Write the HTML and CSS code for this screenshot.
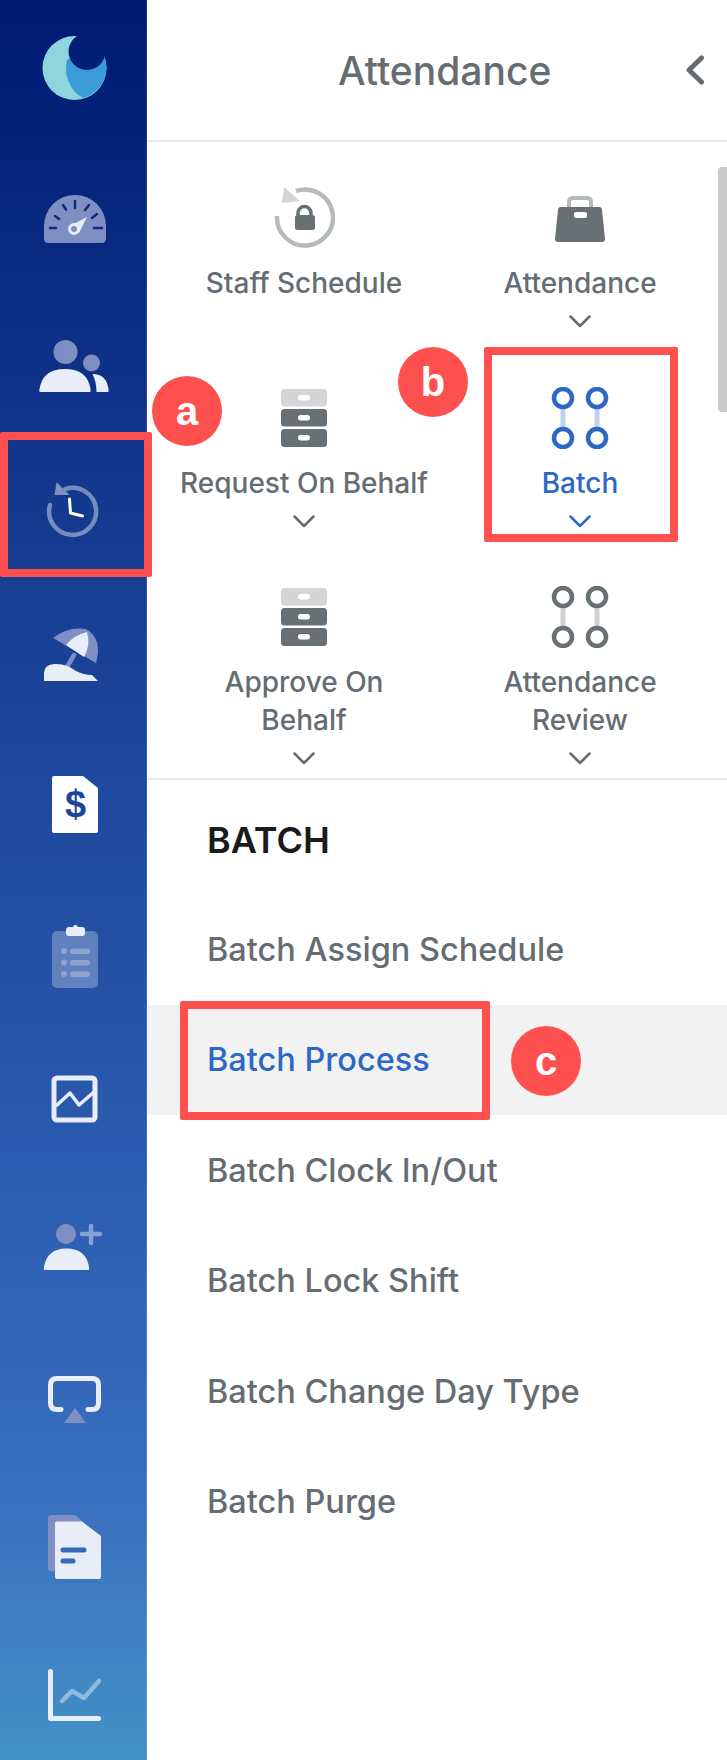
FILE: index.html
```html
<!DOCTYPE html>
<html lang="en">

<head>
    <meta charset="UTF-8">
    <meta name="viewport" content="width=device-width, initial-scale=1.0">
    <title>Attendance</title>
    <link rel="stylesheet" href="styles.css">
</head>

<body>
    <div class="app">
        <nav class="rail">
            <div class="rail-item">
                <svg viewBox="-44 -44 88 88">
                    <mask id="moon-bite"><rect x="-44" y="-44" width="88" height="88" fill="#fff"/><circle cx="13" cy="-22.5" r="18.5" fill="#000"/></mask>
                    <g mask="url(#moon-bite)">
                        <circle cx="0.5" cy="-6" r="32" fill="#8fd6dc"/>
                        <path d="M-7 -14 A34 34 0 0 0 9 24 A32 32 0 0 0 32.5 -6 A32 32 0 0 0 20 -30 Z" fill="#3a9bd8"/>
                    </g>
                </svg>
            </div>
            <div class="rail-item">
                <svg viewBox="-44 -44 88 88"><g transform="translate(-30 -27)">
                    <path class="soft-solid" d="M4 48 Q0 48 0 43 V31 A31 31 0 0 1 62 31 V43 Q62 48 58 48 Z"/>
                    <path class="ticks" d="M6 33 H12 M11 21 L15 24 M19 10 L22 14.5 M31 6 V13 M41 15 L45 10 M48 23 L53 19 M50 33 H58"/>
                    <path class="main-solid" d="M26 31 L43 22 L35 38 Z"/>
                    <circle cx="30" cy="34" r="4.5" fill="#7f8fc4" stroke="#e8edf8" stroke-width="3"/>
                </g></svg>
            </div>
            <div class="rail-item">
                <svg viewBox="-44 -44 88 88"><g transform="translate(-34.5 -30)">
                    <circle class="soft-solid" cx="26" cy="12" r="12"/>
                    <circle class="soft-solid" cx="52" cy="23" r="8.5"/>
                    <path class="main-solid" d="M1 52 Q-1 52 0 49 Q3 29 25.5 29 Q48 29 51 49 L51 52 Z"/>
                    <path class="main-solid" d="M53 34 Q67 34 69 49 L69 52 H57 Q57 42 53 34 Z"/>
                </g></svg>
            </div>
            <div class="rail-item">
                <svg viewBox="-44 -44 88 88"><g transform="translate(-27.5 -36)">
                    <path class="soft-line" d="M3.5 23 A23.5 23.5 0 1 0 19 7"/>
                    <path class="soft-solid" d="M10 0 L23 13 L8 13 Z"/>
                    <path class="hands" d="M23 17 L24 31 L36 34"/>
                </g></svg>
            </div>
            <div class="rail-item">
                <svg viewBox="-44 -44 88 88"><g transform="translate(-30 -39)">
                    <path class="soft-line" d="M30 28 L23 40"/>
                    <path class="soft-solid" d="M9 11 Q24 -1 42 2 Q59 12 52 36 Z"/>
                    <path class="main-solid" d="M22 18 Q30 8 43 5 Q47 18 40 30 Z"/>
                    <path class="main-solid" d="M0 54 V46 Q0 38 10 37 Q22 36 32 44 Q40 48 48 48 L54 54 Z"/>
                </g></svg>
            </div>
            <div class="rail-item">
                <svg viewBox="-44 -44 88 88"><g transform="translate(-22 -38)">
                    <path fill="#fff" d="M2 0 H31 L46 12 V55 Q46 57 44 57 H2 Q0 57 0 55 V2 Q0 0 2 0 Z"/>
                    <text class="dollar" x="23.5" y="41" text-anchor="middle">$</text>
                </g></svg>
            </div>
            <div class="rail-item">
                <svg viewBox="-44 -44 88 88"><g transform="translate(-22 -37)">
                    <rect class="faint-solid" x="0" y="6" width="46" height="57" rx="5"/>
                    <rect class="main-solid" x="14" y="2" width="19" height="9" rx="3"/>
                    <circle class="main-solid" cx="23.5" cy="2.5" r="2.5"/>
                    <g class="faint-solid">
                        <circle cx="12" cy="26" r="3"/><rect x="18" y="23.5" width="20" height="5.5" rx="2.7"/>
                        <circle cx="12" cy="37.5" r="3"/><rect x="18" y="35" width="20" height="5.5" rx="2.7"/>
                        <circle cx="12" cy="49" r="3"/><rect x="18" y="46.5" width="20" height="5.5" rx="2.7"/>
                    </g>
                </g></svg>
            </div>
            <div class="rail-item">
                <svg viewBox="-44 -44 88 88"><g transform="translate(-22 -34)">
                    <rect class="main-line" x="2" y="2" width="41" height="42" rx="3"/>
                    <path class="main-thin" d="M4 30 L18 17 L27 29 L42 16"/>
                </g></svg>
            </div>
            <div class="rail-item">
                <svg viewBox="-44 -44 88 88"><g transform="translate(-30 -34)">
                    <circle class="soft-solid" cx="22" cy="10" r="10"/>
                    <path class="main-solid" d="M1 46 Q-1 46 0 43 Q3 24.5 22.5 24.5 Q42 24.5 45 43 L45 46 Z"/>
                    <path class="soft-line" d="M38 10 H56 M47 2 V19"/>
                </g></svg>
            </div>
            <div class="rail-item">
                <svg viewBox="-44 -44 88 88"><g transform="translate(-26 -30)">
                    <path class="main-line" d="M13 33.500 H9 Q2.500 33.500 2.500 27 V9 Q2.500 2.500 9 2.500 H44 Q50.500 2.500 50.500 9 V27 Q50.500 33.500 44 33.500 H40"/>
                    <path class="soft-solid" d="M16 47 L27 32 L38 47 Z"/>
                </g></svg>
            </div>
            <div class="rail-item">
                <svg viewBox="-44 -44 88 88"><g transform="translate(-26 -39)">
                    <path class="soft-solid" d="M3 0 H27 L34 6 V56 H3 Q0 56 0 53 V3 Q0 0 3 0 Z"/>
                    <path class="main-solid" d="M7 8 Q7 6.500 9 6.500 H34 L53 21 V62 Q53 64 51 64 H9 Q7 64 7 62 Z"/>
                    <path class="doc-bars" d="M15 35 H36 M15 46 H25"/>
                </g></svg>
            </div>
            <div class="rail-item">
                <svg viewBox="-44 -44 88 88"><g transform="translate(-26 -33)">
                    <path class="soft-line" d="M14 32 L24 22 L36 29 L51 12"/>
                    <path class="main-line" d="M2.500 2.500 V49.500 H50.500"/>
                </g></svg>
            </div>
        </nav>

        <main class="panel">
            <header class="panel-head">
                <h1 class="panel-title">Attendance</h1>
                <svg class="back" viewBox="0 0 18 30"><path d="M15.500 3 L3 15 L15.500 27"/></svg>
            </header>

            <section class="modules">
                <div class="module">
                    <svg class="module-icon" width="62" height="62" viewBox="0 0 62 62">
                        <path class="ring" d="M4 29 A28 28 0 1 0 23 4"/>
                        <path class="light-fill" d="M11 0 L27 14 L9 16 Z"/>
                        <path class="lock-top" d="M25 29 V26 A6.500 6.500 0 0 1 38 26 V29"/>
                        <rect class="dark-fill" x="22" y="28" width="20" height="15" rx="2.500"/>
                    </svg>
                    <div class="module-name">Staff Schedule</div>
                </div>
                <div class="module">
                    <svg class="module-icon" width="62" height="62" viewBox="0 0 62 62">
                        <path class="case-handle" d="M20 20 V15 Q20 11 24 11 H38 Q42 11 42 15 V20"/>
                        <path class="dark-fill" d="M9 23 Q9 20 12 20 H50 Q53 20 53 23 L56 52 Q56 55 53 55 H9 Q6 55 6 52 Z"/>
                        <rect x="25" y="25" width="13" height="6" rx="2" fill="#fff"/>
                    </svg>
                    <div class="module-name">Attendance</div>
                    <svg class="chevron" viewBox="0 0 22 13"><path d="M1.500 1.500 L11 11 L20.500 1.500"/></svg>
                </div>
                <div class="module">
                    <svg class="module-icon" width="62" height="62" viewBox="0 0 62 62">
                        <rect class="light-fill" x="8" y="2" width="46" height="17.500" rx="3.500"/>
                        <rect class="dark-fill" x="8" y="22" width="46" height="17.500" rx="3.500"/>
                        <rect class="dark-fill" x="8" y="42" width="46" height="18" rx="3.500"/>
                        <rect x="25" y="8" width="12" height="5.500" rx="2.700" fill="#fff"/>
                        <rect x="25" y="28" width="12" height="5.500" rx="2.700" fill="#fff"/>
                        <rect x="25" y="48" width="12" height="5.500" rx="2.700" fill="#fff"/>
                    </svg>
                    <div class="module-name">Request On Behalf</div>
                    <svg class="chevron" viewBox="0 0 22 13"><path d="M1.500 1.500 L11 11 L20.500 1.500"/></svg>
                </div>
                <div class="module is-active">
                    <svg class="module-icon" width="62" height="62" viewBox="0 0 62 62">
                        <path class="link" d="M14 19 V43 M48 19 V43"/>
                        <g class="node">
                            <circle cx="14" cy="11" r="9"/><circle cx="48" cy="11" r="9"/>
                            <circle cx="14" cy="51" r="9"/><circle cx="48" cy="51" r="9"/>
                        </g>
                    </svg>
                    <div class="module-name">Batch</div>
                    <svg class="chevron" viewBox="0 0 22 13"><path d="M1.500 1.500 L11 11 L20.500 1.500"/></svg>
                </div>
                <div class="module">
                    <svg class="module-icon" width="62" height="62" viewBox="0 0 62 62">
                        <rect class="light-fill" x="8" y="2" width="46" height="17.500" rx="3.500"/>
                        <rect class="dark-fill" x="8" y="22" width="46" height="17.500" rx="3.500"/>
                        <rect class="dark-fill" x="8" y="42" width="46" height="18" rx="3.500"/>
                        <rect x="25" y="8" width="12" height="5.500" rx="2.700" fill="#fff"/>
                        <rect x="25" y="28" width="12" height="5.500" rx="2.700" fill="#fff"/>
                        <rect x="25" y="48" width="12" height="5.500" rx="2.700" fill="#fff"/>
                    </svg>
                    <div class="module-name">Approve On<br>Behalf</div>
                    <svg class="chevron" viewBox="0 0 22 13"><path d="M1.500 1.500 L11 11 L20.500 1.500"/></svg>
                </div>
                <div class="module">
                    <svg class="module-icon" width="62" height="62" viewBox="0 0 62 62">
                        <path class="link" d="M14 19 V43 M48 19 V43"/>
                        <g class="node">
                            <circle cx="14" cy="11" r="9"/><circle cx="48" cy="11" r="9"/>
                            <circle cx="14" cy="51" r="9"/><circle cx="48" cy="51" r="9"/>
                        </g>
                    </svg>
                    <div class="module-name">Attendance<br>Review</div>
                    <svg class="chevron" viewBox="0 0 22 13"><path d="M1.500 1.500 L11 11 L20.500 1.500"/></svg>
                </div>
                <div class="scroll-thumb"></div>
            </section>

            <section class="submenu">
                <h2 class="submenu-title">BATCH</h2>
                <div class="submenu-item">Batch Assign Schedule</div>
                <div class="submenu-item is-active">Batch Process</div>
                <div class="submenu-item">Batch Clock In/Out</div>
                <div class="submenu-item">Batch Lock Shift</div>
                <div class="submenu-item">Batch Change Day Type</div>
                <div class="submenu-item">Batch Purge</div>
            </section>
        </main>

        <!-- callouts on top of the screenshot -->
        <div class="frame frame-a"></div>
        <div class="frame frame-b"></div>
        <div class="frame frame-c"></div>
        <div class="badge badge-a">a</div>
        <div class="badge badge-b">b</div>
        <div class="badge badge-c">c</div>
    </div>
</body>

</html>
```

FILE: styles.css
```css
html,
body {
    margin: 0;
    padding: 0;
    background: #ffffff;
}

.app {
    position: relative;
    display: flex;
    width: 727px;
    height: 1760px;
    overflow: hidden;
    font-family: "Inter", "Liberation Sans", sans-serif;
    color: #656d72;
}

/* left rail */
.rail {
    flex: 0 0 147px;
    box-sizing: border-box;
    display: flex;
    flex-direction: column;
    background: linear-gradient(180deg, #001a72 0, #173f94 600px, #2b5bb0 1160px, #3a6fc0 1500px, #4392c6 1760px);
    border-right: 1px solid rgba(255, 255, 255, 0.12);
}

.rail-item {
    flex: 0 0 148px;
    display: flex;
    align-items: center;
    justify-content: center;
    padding-left: 1px;
}

.rail-item svg {
    width: 88px;
    height: 88px;
}

.main-solid {
    fill: #e8edf8;
}

.soft-solid {
    fill: #7f8fc4;
}

.faint-solid {
    fill: rgba(255, 255, 255, 0.28);
}

.soft-line,
.main-line,
.main-thin,
.ticks,
.hands,
.doc-bars {
    fill: none;
    stroke-linecap: round;
    stroke-linejoin: round;
}

.soft-line {
    stroke: rgba(255, 255, 255, 0.42);
    stroke-width: 4.5;
}

.main-line {
    stroke: #e8edf8;
    stroke-width: 5;
}

.main-thin {
    stroke: #e8edf8;
    stroke-width: 3.5;
    stroke-linecap: butt;
}

.ticks {
    stroke: #0d2a7d;
    stroke-width: 2.5;
}

.hands {
    stroke: #ffffff;
    stroke-width: 3;
}

.doc-bars {
    stroke: #3568bd;
    stroke-width: 5;
}

.dollar {
    font-family: "Liberation Sans", sans-serif;
    font-weight: 700;
    font-size: 38px;
    fill: #1b4598;
}

/* right panel */
.panel {
    flex: 1;
    display: flex;
    flex-direction: column;
}

.panel-head {
    display: flex;
    align-items: center;
    height: 140px;
    padding: 0 23px 0 191px;
    border-bottom: 2px solid #e6e8e8;
}

.panel-title {
    margin: 0;
    font-size: 39px;
    font-weight: 500;
    color: #656d72;
}

.back {
    width: 18px;
    height: 30px;
    margin-left: auto;
}

.back path,
.chevron path {
    fill: none;
    stroke: #656d72;
    stroke-linecap: round;
    stroke-linejoin: round;
}

.back path {
    stroke-width: 5;
}

.chevron path {
    stroke-width: 2.5;
}

.modules {
    position: relative;
    display: grid;
    grid-template-columns: 276px 276px;
    align-content: start;
    row-gap: 58.5px;
    height: 591px;
    padding: 45px 0 0 19px;
    border-bottom: 2px solid #e6e8e8;
}

.module {
    display: flex;
    flex-direction: column;
    align-items: center;
}

.module-name {
    margin-top: 15px;
    font-size: 28px;
    font-weight: 500;
    line-height: 38px;
    text-align: center;
}

.chevron {
    width: 22px;
    height: 13px;
    margin-top: 13px;
}

.dark-fill {
    fill: #687074;
}

.light-fill {
    fill: #d3d5d6;
}

.ring {
    fill: none;
    stroke: #b5babc;
    stroke-width: 4.500;
}

.lock-top,
.case-handle {
    fill: none;
    stroke: #687074;
    stroke-width: 3.500;
}

.case-handle {
    stroke: #b5babc;
    stroke-width: 4;
}

.link {
    fill: none;
    stroke: #cfd2d3;
    stroke-width: 5;
}

.node circle {
    fill: none;
    stroke: #687074;
    stroke-width: 4.500;
}

.is-active {
    color: #2d68c4;
}

.module.is-active .link {
    stroke: #c0d2ec;
}

.module.is-active .node circle,
.module.is-active .chevron path {
    stroke: #2d68c4;
}

.scroll-thumb {
    position: absolute;
    top: 25px;
    right: 0;
    width: 9px;
    height: 245px;
    background: #c9c9c9;
    border-radius: 4px 0 0 4px;
}

.submenu-title {
    display: flex;
    align-items: center;
    height: 108px;
    margin: 0;
    padding: 6px 0 0 60px;
    box-sizing: content-box;
    font-size: 36px;
    font-weight: 600;
    color: #1a1a1a;
}

.submenu-item {
    display: flex;
    align-items: center;
    height: 110.5px;
    padding-left: 60px;
    font-size: 32.5px;
    font-weight: 500;
}

.submenu-item.is-active {
    background: #f2f2f2;
}

/* callouts */
.frame {
    position: absolute;
    border: 8px solid #ff5050;
    border-radius: 2px;
    box-sizing: border-box;
}

.frame-a {
    left: 0;
    top: 432px;
    width: 152px;
    height: 145px;
}

.frame-b {
    left: 484px;
    top: 347px;
    width: 194px;
    height: 195px;
}

.frame-c {
    left: 180px;
    top: 1001px;
    width: 310px;
    height: 119px;
}

.badge {
    position: absolute;
    display: flex;
    align-items: center;
    justify-content: center;
    width: 70px;
    height: 70px;
    border-radius: 50%;
    background: #ff5050;
    font-family: "Liberation Sans", sans-serif;
    font-size: 40px;
    font-weight: 700;
    color: #ffffff;
}

.badge-a {
    left: 152px;
    top: 376px;
}

.badge-b {
    left: 398px;
    top: 347px;
}

.badge-c {
    left: 511px;
    top: 1026px;
}
```
